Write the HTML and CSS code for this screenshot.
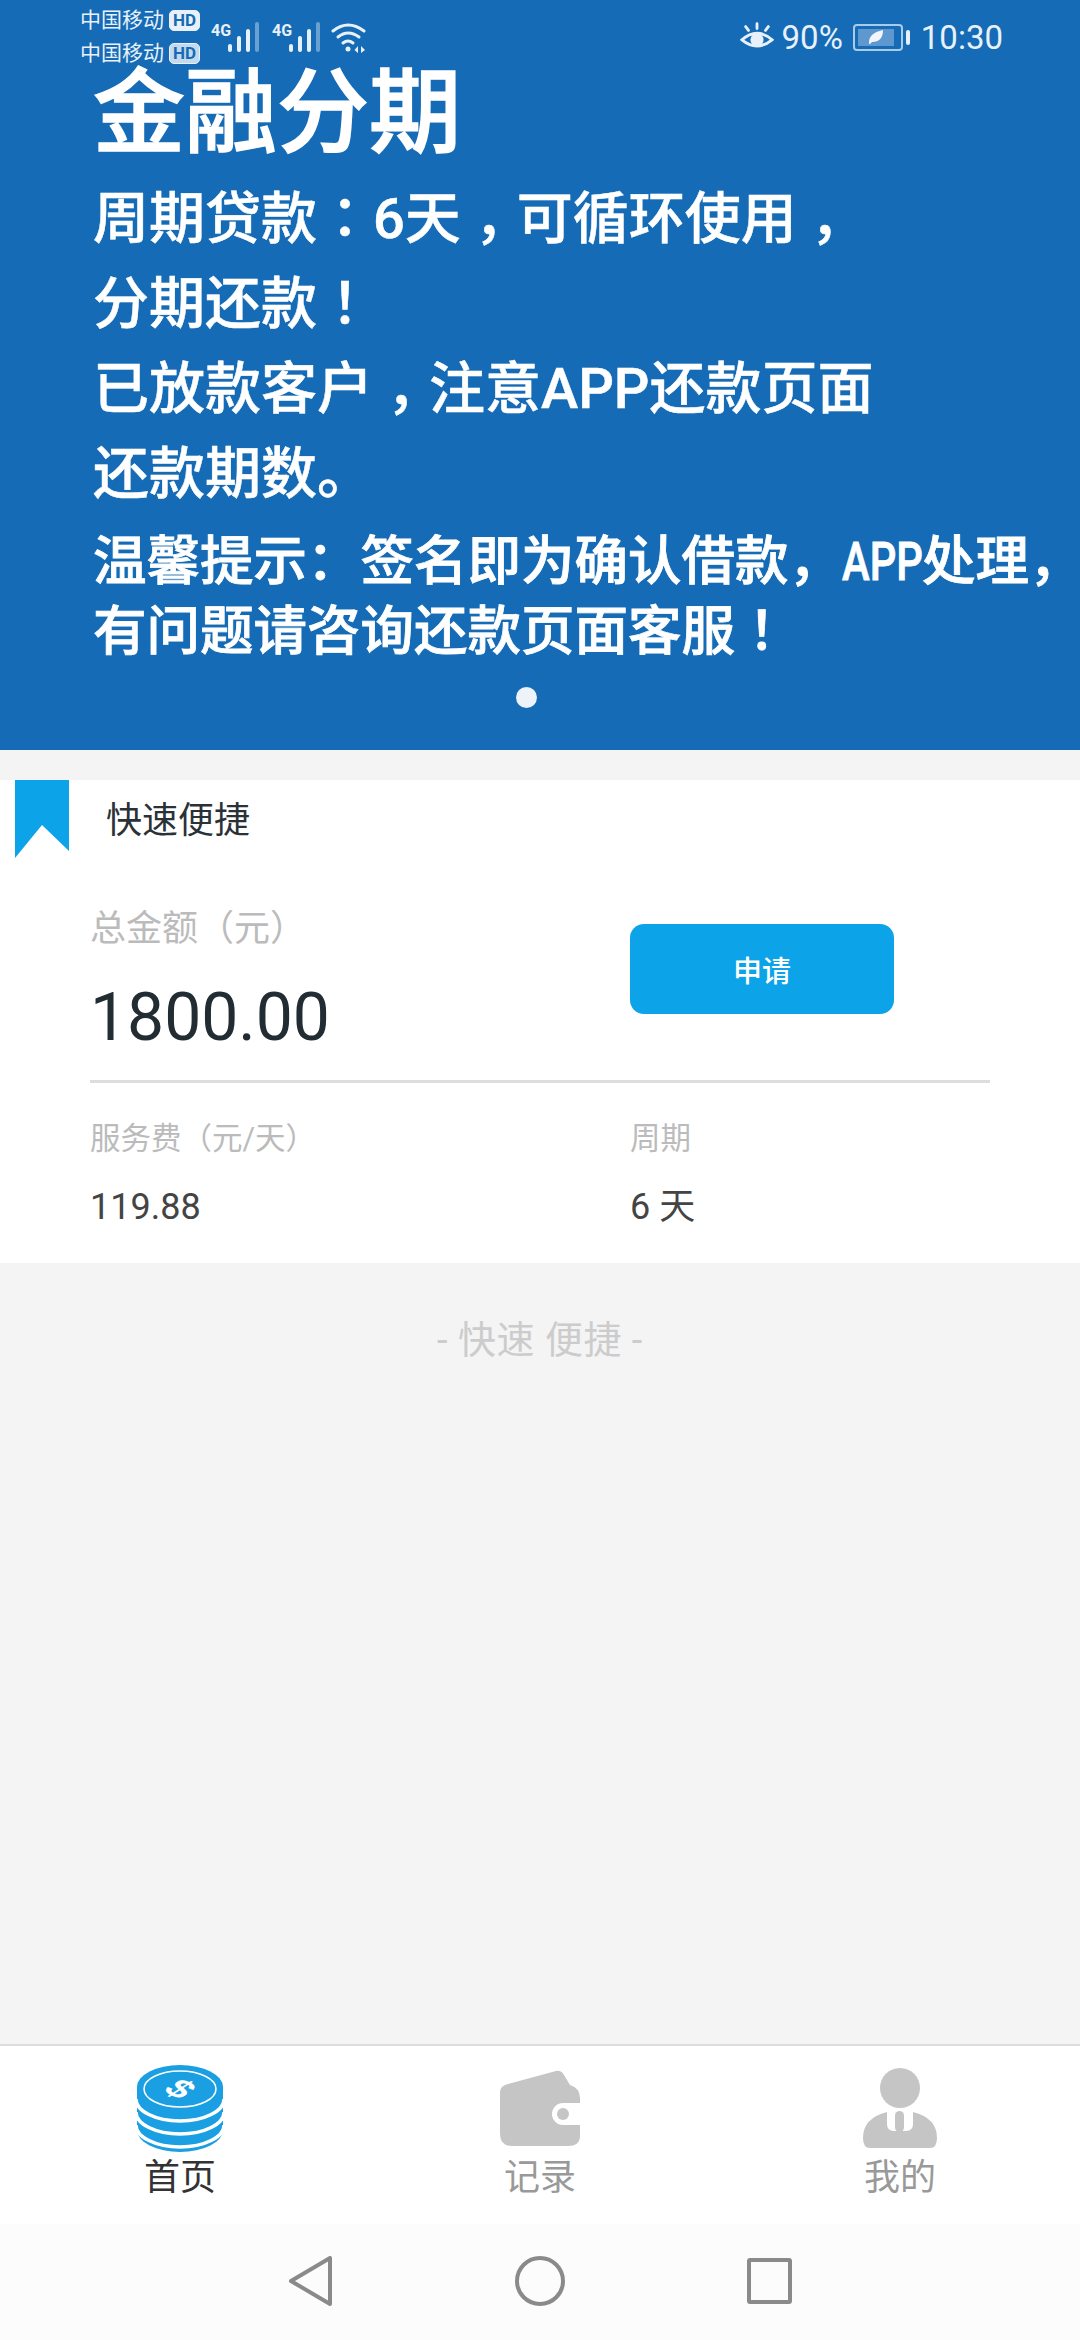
FILE: index.html
```html
<!DOCTYPE html>
<html lang="zh-CN">
<head>
  <meta charset="UTF-8">
  <title>金融分期</title>
  <link rel="stylesheet" href="styles.css">
</head>
<body>
  <div class="status-bar">
    <div class="carriers">
      <div class="carrier">中国移动<span class="hd">HD</span></div>
      <div class="carrier">中国移动<span class="hd hd-line">HD</span></div>
    </div>
    <div class="signal">
      <span class="net">4G</span>
      <svg width="32" height="32" viewBox="0 0 32 32"><rect x="0" y="23" width="4" height="8" rx="2" fill="#e8f1f9"/><rect x="9" y="15" width="4" height="16" rx="2" fill="#e8f1f9"/><rect x="18" y="8" width="4" height="23" rx="2" fill="#e8f1f9"/><rect x="27" y="1" width="4" height="30" rx="2" fill="#6aa1d3"/></svg>
    </div>
    <div class="signal">
      <span class="net">4G</span>
      <svg width="32" height="32" viewBox="0 0 32 32"><rect x="0" y="23" width="4" height="8" rx="2" fill="#e8f1f9"/><rect x="9" y="15" width="4" height="16" rx="2" fill="#e8f1f9"/><rect x="18" y="8" width="4" height="23" rx="2" fill="#e8f1f9"/><rect x="27" y="1" width="4" height="30" rx="2" fill="#6aa1d3"/></svg>
    </div>
    <svg class="wifi" width="36" height="32" viewBox="0 0 36 32" fill="none" stroke="#e8f1f9" stroke-width="3" stroke-linecap="round">
      <path d="M2 9 Q17 -3 33 9"/>
      <path d="M7 15 Q17 7 28 15"/>
      <path d="M12 21 Q17 17 22 21"/>
      <circle cx="17" cy="27" r="2.5" fill="#e8f1f9" stroke="none"/>
      <path d="M27 24 L23.500 28 L27 31 Z M30 24 L34 28 L30 31 Z" fill="#e8f1f9" stroke="none"/>
    </svg>
    <div class="status-right">
      <svg width="34" height="30" viewBox="0 0 36 30">
        <path d="M2 18 Q18 4 34 18 Q18 31 2 18 Z" fill="none" stroke="#e8f1f9" stroke-width="3"/>
        <circle cx="18" cy="18" r="7" fill="#e8f1f9"/>
        <path d="M18 1 V6 M6 4 L9 8 M30 4 L27 8" stroke="#e8f1f9" stroke-width="3" stroke-linecap="round"/>
      </svg>
      <span class="percent">90%</span>
      <div class="battery">
        <div class="battery-body">
          <div class="battery-level">
            <svg width="16" height="16" viewBox="0 0 16 16"><path d="M1 15 Q0 4 15 1 Q15 13 4 13 L2 15 Z" fill="#f2f6fb"/></svg>
          </div>
        </div>
        <div class="battery-tip"></div>
      </div>
      <span class="time">10:30</span>
    </div>
  </div>

  <div class="banner">
    <h1>金融分期</h1>
    <p class="banner-line">周期贷款<span class="mid">：</span>6天<span class="mid low">，</span>可循环使用<span class="mid low">，</span></p>
    <p class="banner-line">分期还款<span class="mid">！</span></p>
    <p class="banner-line">已放款客户<span class="mid low">，</span>注意APP还款页面</p>
    <p class="banner-line">还款期数。</p>
    <div class="banner-tip">
      <p>温馨提示：签名即为确认借款，<span class="narrow">APP</span>处理，</p>
      <p>有问题请咨询还款页面客服<span class="mid">！</span></p>
    </div>
    <div class="dot"></div>
  </div>

  <div class="content">
    <div class="card">
      <div class="card-head">
        <svg class="ribbon" width="54" height="78" viewBox="0 0 54 78"><polygon points="0,0 54,0 54,71 27,45 0,78" fill="#0ca3e8"/></svg>
        <span>快速便捷</span>
      </div>
      <div class="amount-row">
        <div class="amount">
          <div class="amount-label">总金额（元）</div>
          <div class="amount-value">1800.00</div>
        </div>
        <button class="apply-button">申请</button>
      </div>
      <div class="detail-row">
        <div class="detail detail-fee">
          <div class="detail-label">服务费（元/天）</div>
          <div class="detail-value">119.88</div>
        </div>
        <div class="detail">
          <div class="detail-label">周期</div>
          <div class="detail-value">6 天</div>
        </div>
      </div>
    </div>
    <div class="slogan">- 快速 便捷 -</div>
  </div>

  <div class="tabbar">
    <div class="tab tab-active">
      <svg width="86" height="87" viewBox="0 0 86 87">
        <path d="M0 22 A43 22 0 0 1 86 22 V65 A43 22 0 0 1 0 65 Z" fill="#1a9fe3"/>
        <g fill="none" stroke="#fff" stroke-width="3.500">
          <path d="M-1 34 A44 22 0 0 0 87 34"/>
          <path d="M-1 47 A44 22 0 0 0 87 47"/>
          <path d="M-1 60 A44 22 0 0 0 87 60"/>
        </g>
        <ellipse cx="43" cy="24" rx="36" ry="18" fill="none" stroke="#fff" stroke-width="1.500"/>
        <text class="coin-sign" transform="translate(43 24) scale(1.2 .7) rotate(42)" text-anchor="middle" y="12">$</text>
      </svg>
      <span>首页</span>
    </div>
    <div class="tab">
      <svg width="80" height="87" viewBox="0 -5 80 87">
        <path d="M0 22 Q0 16 8 14 L56 1 Q61 0 64 5 L70 15 Q80 18 80 28 L80 33 L63 33 A11 11 0 0 0 63 55 L80 55 L80 66 Q80 76 68 76 L12 76 Q0 76 0 64 Z" fill="#c6c5c6"/>
        <circle cx="63" cy="44" r="6" fill="#c6c5c6"/>
      </svg>
      <span>记录</span>
    </div>
    <div class="tab">
      <svg width="76" height="87" viewBox="0 -3 76 87">
        <circle cx="38" cy="20" r="20" fill="#c6c5c6"/>
        <path d="M25 44 L25 56 Q25 63 32 63 L44 63 Q51 63 51 56 L51 44 Q75 50 75 70 Q75 80 68 80 L8 80 Q1 80 1 70 Q1 50 25 44 Z" fill="#c6c5c6"/>
        <rect x="33" y="43" width="9" height="21" rx="4.500" fill="#c6c5c6"/>
      </svg>
      <span>我的</span>
    </div>
  </div>

  <div class="navbar">
    <svg width="44" height="50" viewBox="0 0 44 50"><path d="M41 2 V48 L2 25 Z" fill="none" stroke="#8a8a8a" stroke-width="4" stroke-linejoin="round"/></svg>
    <svg width="50" height="50" viewBox="0 0 50 50"><circle cx="25" cy="25" r="23" fill="none" stroke="#8a8a8a" stroke-width="4"/></svg>
    <div class="nav-square"></div>
  </div>
</body>
</html>
```

FILE: styles.css
```css
html, body {
  margin: 0;
  padding: 0;
}
body {
  position: relative;
  display: flex;
  flex-direction: column;
  width: 1080px;
  height: 2340px;
  overflow: hidden;
  background: #f4f4f4;
  font-family: Roboto, "Noto Sans CJK SC", sans-serif;
}
p, h1 {
  margin: 0;
}

/* status bar sits over the banner */
.status-bar {
  position: absolute;
  top: 4px;
  left: 80px;
  right: 77px;
  display: flex;
  align-items: flex-start;
  color: #e8f1f9;
}
.carrier {
  display: flex;
  align-items: center;
  height: 33px;
  font-size: 21px;
  line-height: 33px;
}
.hd {
  margin-left: 5px;
  padding: 0 3px;
  height: 19px;
  border: 1px solid #e8f1f9;
  border-radius: 5px;
  background: #e8f1f9;
  color: #156bb5;
  font-size: 17px;
  font-weight: 700;
  line-height: 19px;
}
.hd-line {
  background: #c3d9ee;
}
.signal {
  display: flex;
  align-items: flex-start;
  margin-top: 17px;
  margin-left: 11px;
}
.signal + .signal {
  margin-left: 12px;
}
.net {
  width: 17px;
  font-size: 16px;
  font-weight: 700;
  line-height: 18px;
  margin-top: 1px;
}
.wifi {
  margin-top: 18px;
  margin-left: 10px;
}
.status-right {
  display: flex;
  align-items: center;
  margin-left: auto;
  margin-top: 17px;
  height: 32px;
}
.percent {
  margin-left: 8px;
  font-size: 33px;
}
.battery {
  display: flex;
  align-items: center;
  margin-left: 10px;
}
.battery-body {
  box-sizing: border-box;
  width: 50px;
  height: 27px;
  padding: 3px;
  border: 2px solid #a9cbe8;
  border-radius: 4px;
}
.battery-level {
  display: flex;
  align-items: center;
  justify-content: center;
  width: 36px;
  height: 17px;
  background: #5f98cf;
}
.battery-tip {
  width: 4px;
  height: 15px;
  margin-left: 3px;
  border-radius: 2px;
  background: #e8f1f9;
}
.time {
  margin-left: 11px;
  font-size: 33px;
}

/* banner */
.banner {
  box-sizing: border-box;
  height: 750px;
  padding: 75px 0 0 93px;
  background: #156bb5;
  color: #fff;
}
.banner h1 {
  font-size: 92px;
  font-weight: 500;
  line-height: 78px;
  margin-bottom: 24px;
  -webkit-text-stroke: 1.5px #fff;
}
.banner-line {
  height: 85px;
  font-size: 56px;
  font-weight: 500;
  line-height: 85px;
  -webkit-text-stroke: 0.5px #fff;
}
/* these marks sit in the middle of their cell in the picture */
.mid {
  display: inline-block;
  font-family: "Noto Sans CJK TC", sans-serif;
  line-height: 1;
}
.low {
  transform: translateY(17px);
}
.banner-tip {
  margin-top: 10px;
  font-size: 53.5px;
  font-weight: 500;
  line-height: 70px;
  white-space: nowrap;
  -webkit-text-stroke: 0.8px #fff;
}
.banner-tip p {
  height: 70px;
}
.narrow {
  display: inline-block;
  width: 80px;
  transform: scaleX(.78);
  transform-origin: left;
}
.dot {
  width: 21px;
  height: 21px;
  margin: 20px 0 0 423px;
  border-radius: 50%;
  background: #eef3f9;
}

/* card */
.content {
  flex: 1;
  padding-top: 30px;
}
.card {
  height: 483px;
  background: #fff;
}
.card-head {
  display: flex;
  height: 78px;
  padding-left: 15px;
  color: #2a3238;
  font-size: 36px;
  line-height: 82px;
}
.card-head span {
  margin-left: 37px;
}
.amount-row {
  display: flex;
  justify-content: space-between;
  box-sizing: border-box;
  width: 900px;
  height: 225px;
  margin-left: 90px;
  padding-top: 46px;
  border-bottom: 3px solid #ddd;
}
.amount {
  width: 540px;
}
.amount-label {
  color: #bbb;
  font-size: 36px;
  line-height: 50px;
}
.amount-value {
  margin-top: 26px;
  color: #222d33;
  font-size: 66px;
  line-height: 76px;
}
.apply-button {
  width: 264px;
  height: 90px;
  margin: 20px 96px 0 0;
  border: none;
  border-radius: 14px;
  background: #0ca3e8;
  color: #fff;
  font-family: inherit;
  font-size: 29px;
  font-weight: 500;
}
.detail-row {
  display: flex;
  padding: 36px 0 0 90px;
}
.detail-fee {
  width: 540px;
}
.detail-label {
  color: #bbb;
  font-size: 30.5px;
  line-height: 40px;
}
.detail-value {
  margin-top: 26px;
  color: #444;
  font-size: 36px;
  line-height: 44px;
}
.slogan {
  margin-top: 53px;
  color: #ccc;
  font-size: 38px;
  letter-spacing: .5px;
  line-height: 48px;
  text-align: center;
}

/* bottom tabs */
.tabbar {
  display: flex;
  box-sizing: border-box;
  height: 180px;
  padding-top: 19px;
  border-top: 2px solid #ddd;
  background: #fff;
}
.tab {
  display: flex;
  flex: 1;
  flex-direction: column;
  align-items: center;
  color: #999;
  font-size: 36px;
  line-height: 52px;
}
.tab svg {
  display: block;
}
.tab-active {
  color: #333;
}
.coin-sign {
  fill: #fff;
  font-family: "Liberation Sans", sans-serif;
  font-size: 36px;
  font-weight: 700;
}

/* system nav */
.navbar {
  display: flex;
  align-items: center;
  gap: 182px;
  justify-content: center;
  height: 116px;
  padding-bottom: 3px;
  box-sizing: border-box;
  background: #fcfcfc;
}
.nav-square {
  box-sizing: border-box;
  width: 45px;
  height: 46px;
  border: 4px solid #8a8a8a;
  border-radius: 3px;
}
```
